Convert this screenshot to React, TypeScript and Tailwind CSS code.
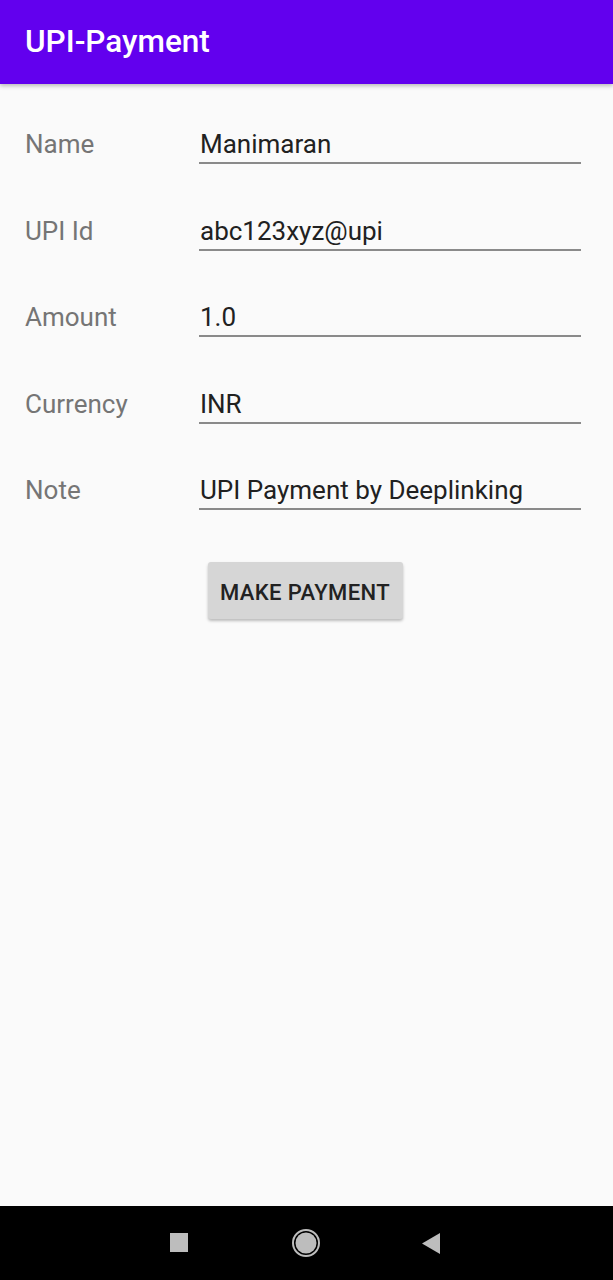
import React from "react";

const rows = [
  ["Name", "Manimaran"],
  ["UPI Id", "abc123xyz@upi"],
  ["Amount", "1.0"],
  ["Currency", "INR"],
  ["Note", "UPI Payment by Deeplinking"],
];

export default function App() {
  return (
    <div className="w-[613px] h-[1280px] flex flex-col bg-[#fafafa] overflow-hidden" style={{ fontFamily: "Roboto, 'Noto Sans', sans-serif" }}>
      <div className="h-[84px] shrink-0 bg-[#6200ee] flex items-center pl-[25px] shadow-[0_2px_4px_rgba(0,0,0,0.25)] relative z-10">
        <span className="text-white text-[31.5px] font-medium leading-none">UPI-Payment</span>
      </div>
      <div className="flex-1 flex flex-col pt-[45px]">
        <div className="flex flex-col gap-[51.5px]">
          {rows.map(([label, value]) => (
            <div key={label} className="flex items-start">
              <div className="w-[199px] shrink-0 pl-[25px] text-[26px] leading-[30px] text-[#757575]">{label}</div>
              <div className="w-[382px] border-b-2 border-[#8a8a8a] pb-[3px] pl-px text-[26px] leading-[30px] text-[#212121]">{value}</div>
            </div>
          ))}
        </div>
        <div className="flex justify-center mt-[52px] pr-[3px]">
          <button className="w-[195px] h-[57px] pt-[3px] bg-[#d6d6d6] rounded-[3px] shadow-[0_2px_3px_rgba(0,0,0,0.25)] text-[22px] font-medium text-[#222222] tracking-[0.4px]">
            MAKE PAYMENT
          </button>
        </div>
      </div>
      <div className="h-[74px] shrink-0 bg-black flex items-center">
        <div className="w-[613px] relative h-full">
          <div className="absolute left-[170px] top-[27px] w-[18px] h-[19px] bg-[#bdbdbd]" />
          <svg className="absolute left-[292px] top-[23px]" width="28" height="28" viewBox="0 0 28 28">
            <circle cx="14" cy="14" r="13" fill="none" stroke="#bdbdbd" strokeWidth="2" />
            <circle cx="14" cy="14" r="10.5" fill="#bdbdbd" />
          </svg>
          <svg className="absolute left-[422px] top-[27px]" width="19" height="21" viewBox="0 0 19 21">
            <polygon points="18,0 18,21 0,10.5" fill="#bdbdbd" />
          </svg>
        </div>
      </div>
    </div>
  );
}
